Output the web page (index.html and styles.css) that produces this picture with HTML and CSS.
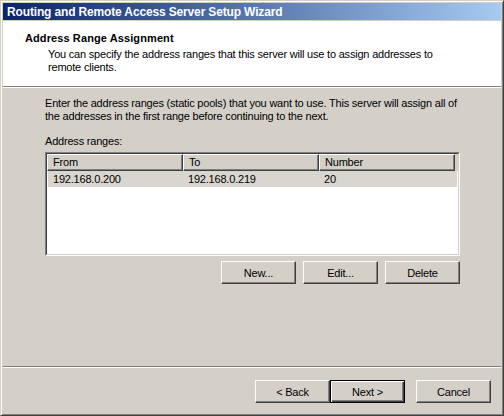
FILE: index.html
```html
<!DOCTYPE html>
<html>
<head>
<meta charset="utf-8">
<link rel="stylesheet" href="styles.css">
</head>
<body>
<div class="window">
  <div class="titlebar"><span class="title">Routing and Remote Access Server Setup Wizard</span></div>
  <div class="client">
    <div class="header">
      <div class="h-title">Address Range Assignment</div>
      <div class="h-sub">You can specify the address ranges that this server will use to assign addresses to<br>remote clients.</div>
    </div>
    <div class="sep"></div>
    <div class="body">
      <p class="intro">Enter the address ranges (static pools) that you want to use. This server will assign all of<br>the addresses in the first range before continuing to the next.</p>
      <div class="label">Address ranges:</div>
      <div class="listview">
        <div class="lv-inner">
          <div class="lv-header">
            <div class="col">From</div>
            <div class="col">To</div>
            <div class="col">Number</div>
          </div>
          <div class="lv-row selected">
            <div class="cell">192.168.0.200</div>
            <div class="cell">192.168.0.219</div>
            <div class="cell">20</div>
          </div>
        </div>
      </div>
      <div class="btn-row">
        <button class="btn">New...</button>
        <button class="btn">Edit...</button>
        <button class="btn">Delete</button>
      </div>
    </div>
    <div class="sep"></div>
    <div class="footer">
      <button class="btn">&lt; Back</button>
      <button class="btn default">Next &gt;</button>
      <button class="btn cancel">Cancel</button>
    </div>
  </div>
</div>
</body>
</html>
```

FILE: styles.css
```css
* { box-sizing: border-box; }
html, body { margin: 0; padding: 0; }
body {
  font-family: "Liberation Sans", Arial, sans-serif;
  font-size: 11px;
  color: #000;
  background: #d4d0c8;
  letter-spacing: -0.2px;
}
.window {
  width: 504px;
  height: 416px;
  border: 1px solid;
  border-color: #d4d0c8 #404040 #404040 #d4d0c8;
  box-shadow: inset 1px 1px #fff, inset -1px -1px #808080;
  padding: 2px;
  display: flex;
  flex-direction: column;
  background: #d4d0c8;
}
.titlebar {
  flex: none;
  height: 17px;
  margin-bottom: 1px;
  background: linear-gradient(to right, #0a246a, #a6caf0);
  color: #fff;
  font-weight: bold;
  font-size: 12px;
  letter-spacing: -0.15px;
  padding-left: 4px;
  display: flex;
  align-items: center;
  white-space: nowrap;
}
.client {
  flex: 1;
  display: flex;
  flex-direction: column;
  min-height: 0;
}
.header {
  flex: none;
  height: 65px;
  background: #fff;
  padding: 11px 0 0 22px;
  white-space: nowrap;
}
.h-title { font-weight: bold; line-height: 13px; letter-spacing: 0.1px; }
.h-sub { padding-left: 23px; margin-top: 3px; line-height: 13px; }
.sep {
  flex: none;
  height: 2px;
  border-top: 1px solid #808080;
  border-bottom: 1px solid #fff;
}
.body {
  flex: 1;
  padding: 9px 0 0 42px;
  white-space: nowrap;
}
.intro { margin: 0; line-height: 13px; }
.label { margin-top: 12px; line-height: 13px; }
.listview {
  margin-top: 4px;
  width: 415px;
  height: 104px;
  border: 1px solid;
  border-color: #808080 #fff #fff #808080;
}
.lv-inner {
  height: 100%;
  border: 1px solid;
  border-color: #404040 #d4d0c8 #d4d0c8 #404040;
  background: #fff;
}
.lv-header {
  display: flex;
  height: 17px;
  background: #d4d0c8;
}
.col {
  width: 136px;
  height: 17px;
  line-height: 14px;
  padding-left: 5px;
  border: 1px solid;
  border-color: #fff #404040 #404040 #fff;
  box-shadow: inset -1px -1px #808080;
}
.lv-row {
  display: flex;
  height: 16px;
  margin: 0 1px;
  line-height: 16px;
}
.lv-row.selected { background: #d9d6d0; }
.cell { width: 136px; padding-left: 5px; }
.cell:first-child { width: 135px; }
.btn-row {
  width: 415px;
  margin-top: 5px;
  display: flex;
  justify-content: flex-end;
  gap: 7px;
}
.btn {
  width: 75px;
  height: 23px;
  padding: 0;
  margin: 0;
  font-family: inherit;
  font-size: 11px;
  letter-spacing: -0.2px;
  color: #000;
  background: #d4d0c8;
  border: 1px solid;
  border-color: #fff #404040 #404040 #fff;
  box-shadow: inset -1px -1px #808080;
}
.btn.default {
  border: 1px solid #000;
  box-shadow: inset 1px 1px #fff, inset -1px -1px #404040, inset -2px -2px #808080;
}
.btn.cancel { margin-left: 11px; }
.footer {
  flex: none;
  height: 45px;
  display: flex;
  justify-content: flex-end;
  align-items: flex-start;
  padding: 12px 10px 0 0;
}
```
